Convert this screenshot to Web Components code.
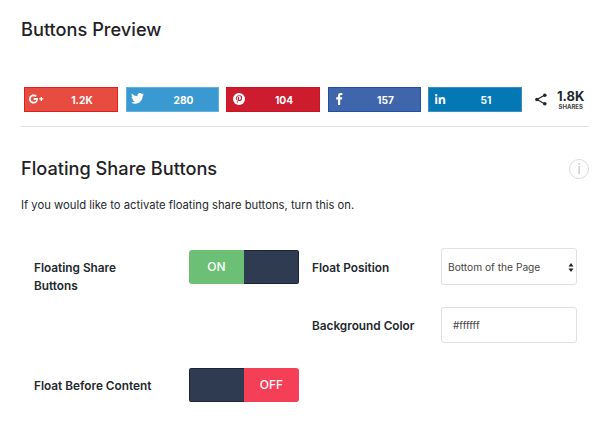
<!DOCTYPE html>
<html><head><meta charset="utf-8"><style>
html,body{margin:0;background:#fff}
body{font-family:Inter,"Liberation Sans",sans-serif;color:#23282d;width:600px;height:433px;overflow:hidden}
</style></head><body>
<settings-panel></settings-panel>
<script>
const ICONS={
g:'<svg width="15" height="10" viewBox="0 0 15 10"><path fill="#fff" d="M4.600 4.100v1.800h2.600C7 7 6.100 7.800 4.600 7.800 3 7.800 1.700 6.500 1.700 5S3 2.200 4.600 2.200c.8 0 1.400.3 1.900.7L7.700 1.700C6.900.9 5.800.4 4.600.4 2 .4 0 2.500 0 5s2 4.600 4.600 4.600c2.700 0 4.400-1.900 4.400-4.500 0-.3 0-.7-.1-1zM13 4.300V3h-1.300v1.300h-1.300v1.300h1.300v1.300H13V5.600h1.300V4.300z"/></svg>',
t:'<svg width="13" height="11" viewBox="0 0 24 20"><path fill="#fff" d="M24 2.400c-.9.400-1.800.7-2.800.8 1-.6 1.800-1.600 2.200-2.700-1 .6-2 1-3.100 1.200C19.300.7 18 0 16.600 0c-3.200 0-5.500 3-4.800 6C7.700 5.800 4.100 3.900 1.700.9.400 3.100 1 6 3.200 7.500c-.8 0-1.600-.2-2.200-.6-.1 2.300 1.600 4.500 3.900 5-.7.200-1.500.2-2.200.1.600 2 2.400 3.400 4.600 3.400C5.200 17 2.600 17.700 0 17.400 2.200 18.800 4.800 19.600 7.500 19.600c9.100 0 14.300-7.700 14-14.600 1-.7 1.800-1.600 2.500-2.600z"/></svg>',
p:'<svg width="12" height="12" viewBox="0 0 22 22"><circle cx="11" cy="11" r="11" fill="#fff"/><path fill="#cd1c2d" d="M11.600 4C7.400 4 5.300 7 5.300 9.600c0 1.500.6 2.900 1.800 3.400.2.100.4 0 .4-.2l.2-.8c.1-.2 0-.3-.1-.5-.4-.4-.6-1-.6-1.700 0-2.200 1.600-4.100 4.200-4.100 2.300 0 3.500 1.400 3.500 3.200 0 2.400-1.100 4.100-2.700 4.100-.9 0-1.500-.7-1.300-1.600.2-1 .7-2.100.7-2.900 0-.7-.4-1.200-1.100-1.200-.9 0-1.600.9-1.600 2.200 0 .8.300 1.300.3 1.300l-1.100 4.600c-.2.900-.1 2.100 0 3l.1.100c.5-.7 1.100-1.700 1.400-2.600l.6-2.200c.3.600 1.200 1.100 2.100 1.100 2.800 0 4.700-2.500 4.700-5.800C17.300 6.400 15 4 11.600 4z"/></svg>',
f:'<svg width="7" height="12" viewBox="0 0 7 12"><path fill="#fff" d="M2 12V6.500H.2V4.300H2V2.800C2 1 3 0 4.700 0c.7 0 1.400.1 1.600.1v2H5.200c-.9 0-1 .4-1 1v1.200h2.100l-.3 2.200H4.200V12z"/></svg>',
l:'<svg width="11" height="10" viewBox="0 0 12 11"><path fill="#fff" d="M.2 3.600h2.300V11H.2zM1.300 0a1.300 1.300 0 1 1 0 2.700 1.300 1.300 0 0 1 0-2.700zM4 3.600h2.200v1c.3-.6 1.100-1.200 2.200-1.200 2.400 0 2.900 1.500 2.900 3.600v4H9V7.400c0-.9 0-1.900-1.200-1.900s-1.400.9-1.400 1.900V11H4z"/></svg>'
};
class ShareButton extends HTMLElement{
  constructor(){super();const a=this.attachShadow({mode:'open'});
    a.innerHTML=`<style>
    :host{display:flex;flex:none;box-sizing:border-box;height:25px;width:var(--w,94px);align-items:center;border:1px solid var(--b);background:var(--c);color:#fff;font:700 10.200px/1 Inter,"Liberation Sans",sans-serif;padding-left:4px}
    .i{box-sizing:border-box;width:30px;display:flex;align-items:center;padding-left:var(--il,0);margin-bottom:2px}
    .t{flex:1;text-align:center;padding:1px 12px 0 0}
    svg{display:block}
    </style><span class="i">${ICONS[this.getAttribute('icon')]}</span><span class="t"><slot></slot></span>`;}
}
customElements.define('share-button',ShareButton);
class ShareTotal extends HTMLElement{
  constructor(){super();this.attachShadow({mode:'open'}).innerHTML=`<style>
    :host{display:flex;flex:none;align-items:center;gap:10px;margin-left:6px}
    .n{font:700 13px/12px Inter,"Liberation Sans",sans-serif;color:#23282d;text-align:center;margin-bottom:1px}
    .s{font:700 6px/7px Inter,"Liberation Sans",sans-serif;color:#444;text-align:center}
    svg{display:block}
    </style><svg width="12" height="13" viewBox="0 0 12 13"><path d="M9.500 2.200 2 6.500 9.500 10.800" fill="none" stroke="#23282d" stroke-width="1.300"/><circle cx="9.800" cy="2.200" r="1.800" fill="#23282d"/><circle cx="1.900" cy="6.500" r="1.800" fill="#23282d"/><circle cx="9.800" cy="10.800" r="1.800" fill="#23282d"/></svg><div><div class="n">1.8K</div><div class="s">SHARES</div></div>`;}
}
customElements.define('share-total',ShareTotal);
class ToggleSwitch extends HTMLElement{
  constructor(){super();const on=this.getAttribute('state')==='on';
    this.attachShadow({mode:'open'}).innerHTML=`<style>
    :host{display:flex;box-sizing:border-box;width:110px;height:34px;border-radius:3px;overflow:hidden;font:500 12px/1 Inter,"Liberation Sans",sans-serif;color:#fff}
    div{display:flex;align-items:center;justify-content:center;box-sizing:border-box}
    .a{flex:0 0 55px}.b{flex:1}
    .on{background:#6cc076}.off{background:#f53f57}.dark{background:#2e3b50;border:1px solid #1b2536}
    .a.dark{border-right:0}.b.dark{border-left:0}
    </style>${on?'<div class="a on">ON</div><div class="b dark"></div>':'<div class="a dark"></div><div class="b off">OFF</div>'}`;}
}
customElements.define('toggle-switch',ToggleSwitch);
class SelectBox extends HTMLElement{
  constructor(){super();this.attachShadow({mode:'open'}).innerHTML=`<style>
    :host{display:flex;box-sizing:border-box;width:136px;height:37px;border:1px solid #e1e1e1;border-radius:3px;align-items:center;justify-content:space-between;padding:1px 2px 0 6px;font:400 10.200px/1 Inter,"Liberation Sans",sans-serif;color:#444;background:#fff}
    svg{display:block}
    </style><span><slot></slot></span><svg width="6" height="9" viewBox="0 0 6 9"><path fill="#222" d="M3 0 5.500 3.500H.5zM3 9 .5 5.500h5z"/></svg>`;}
}
customElements.define('select-box',SelectBox);
class TextBox extends HTMLElement{
  constructor(){super();this.attachShadow({mode:'open'}).innerHTML=`<style>
    :host{display:flex;box-sizing:border-box;width:136px;height:36px;border:1px solid #e1e1e1;border-radius:3px;align-items:center;padding:0 11px;font:400 10px/1 Inter,"Liberation Sans",sans-serif;color:#444;background:#fff}
    </style><slot></slot>`;}
}
customElements.define('text-box',TextBox);
class FieldLabel extends HTMLElement{
  constructor(){super();this.attachShadow({mode:'open'}).innerHTML=`<style>
    :host{display:block;font:600 11.800px/18px Inter,"Liberation Sans",sans-serif;color:#23282d}
    </style><slot></slot>`;}
}
customElements.define('field-label',FieldLabel);
class SettingsPanel extends HTMLElement{
  constructor(){super();this.attachShadow({mode:'open'}).innerHTML=`<style>
    :host{display:block;box-sizing:border-box;padding:18px 11px 0 21px;width:600px}
    h2{margin:0;font:500 18.200px/22px Inter,"Liberation Sans",sans-serif;color:#1f2226}
    .btns{display:flex;align-items:center;gap:7px;margin:47px 0 0 3px;height:25px}
    .btns .nudge{margin-left:1px}
    hr{border:0;height:1px;background:#dfe1e8;margin:14px 0 0}
    .head{display:flex;justify-content:space-between;align-items:center;margin-top:30px}
    .info{box-sizing:border-box;width:20px;height:20px;border:1px solid #dcdcdc;border-radius:50%;display:flex;align-items:center;justify-content:center;font:400 13px/1 Inter,"Liberation Sans",sans-serif;color:#c4c4c4;transform:translateY(1px)}
    p{margin:18px 0 0;font:400 11.250px/16px Inter,"Liberation Sans",sans-serif;color:#23282d}
    .grid{display:grid;grid-template-columns:155px 123px 129px 136px;margin:35px 0 0 13px;grid-template-rows:37px 36px 40px;row-gap:22px}
    .grid>*{align-self:center}
    .top{align-self:start!important;margin-top:11px}
    .lift{padding-top:2px}
    .r2{grid-row:2}
    .r3{grid-row:3}
    </style>
    <h2>Buttons Preview</h2>
    <div class="btns">
      <share-button icon="g" style="--c:#e74c40;--b:#e0201a">1.2K</share-button>
      <share-button class="nudge" icon="t" style="--c:#3a99d0;--b:#5eb2e2;--w:93px;--il:0">280</share-button>
      <share-button icon="p" style="--c:#cd1c2d;--b:#c8151f;--il:2px">104</share-button>
      <share-button class="nudge" icon="f" style="--c:#3f65ab;--b:#1f4fa8;--w:93px;--il:3px">157</share-button>
      <share-button icon="l" style="--c:#0478b4;--b:#3a8fc0;--il:2px">51</share-button>
      <share-total></share-total>
    </div>
    <hr>
    <div class="head"><h2>Floating Share Buttons</h2><span class="info">i</span></div>
    <p>If you would like to activate floating share buttons, turn this on.</p>
    <div class="grid">
      <field-label class="top" style="width:110px">Floating Share Buttons</field-label>
      <toggle-switch state="on"></toggle-switch>
      <field-label class="lift">Float Position</field-label>
      <select-box>Bottom of the Page</select-box>
      <field-label class="r2 lift" style="grid-column:3">Background Color</field-label>
      <text-box class="r2" style="grid-column:4">#ffffff</text-box>
      <field-label class="r3" style="grid-column:1;padding-top:1px">Float Before Content</field-label>
      <toggle-switch class="r3" style="grid-column:2" state="off"></toggle-switch>
    </div>`;}
}
customElements.define('settings-panel',SettingsPanel);
</script>
</body></html>
